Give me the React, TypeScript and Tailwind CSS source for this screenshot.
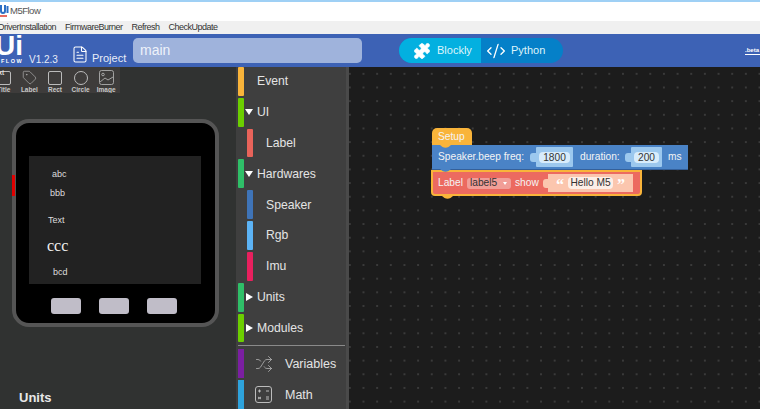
import { Puzzle, CodeXml, FileText, Tag, Shuffle } from 'lucide-react';

interface RowProps {
  label: string;
  color: string;
  indent?: boolean;
  arrow?: 'down' | 'right';
}

function ToolboxRow({ label, color, indent, arrow }: RowProps) {
  return (
    <div className="flex h-[29px] items-center text-[12.2px] text-[#e4e4e4]">
      <div className={`h-full w-[6px] rounded-[1px] ${color} ${indent ? 'ml-[9px]' : ''}`} />
      {arrow === 'down' && <span className="ml-[1px] h-0 w-0 border-x-[4px] border-t-[6px] border-x-transparent border-t-white" />}
      {arrow === 'right' && <span className="ml-[2px] h-0 w-0 border-y-[4px] border-l-[7px] border-y-transparent border-l-white" />}
      <span className={arrow ? 'ml-[4px]' : 'ml-[13px]'}>{label}</span>
    </div>
  );
}

function PaletteItem({ label, children }: { label: string; children: React.ReactNode }) {
  return (
    <div className="flex w-[25.6px] flex-col items-center pt-[3px]">
      <div className="flex h-[15px] items-center justify-center">{children}</div>
      <span className="mt-[1px] text-[6.5px] leading-[8px] font-bold text-[#c8c8c8]">{label}</span>
    </div>
  );
}

function Notch({ color, className }: { color: string; className: string }) {
  return (
    <svg className={`absolute z-10 ${className}`} width="11" height="3" viewBox="0 0 11 3">
      <path d="M0 0H11L8.5 2Q5.5 3.4 2.5 2Z" fill={color} />
    </svg>
  );
}

function NumberField({ value, outer, tab }: { value: string; outer: string; tab: string }) {
  return (
    <div className="flex items-center">
      <div className={`h-[9px] w-[6px] rounded-l-[3px] ${tab}`} />
      <div className={`flex h-[20px] items-center justify-center rounded-[1px] ${outer}`}>
        <span className="rounded-[4px] bg-[#d8ecfb] px-[4px] text-[10.2px] leading-[11px] text-[#333]">{value}</span>
      </div>
    </div>
  );
}

export default function App() {
  return (
    <div className="flex h-[409px] w-[760px] flex-col overflow-hidden bg-white font-['Liberation_Sans',Arial,sans-serif]">
      {/* Title bar */}
      <div className="flex h-[21px] shrink-0 items-center border-t-2 border-[#9fd0f5] bg-white">
        <svg width="9" height="13" viewBox="0 0 9 13" fill="none">
          <path d="M1 0V6Q1 8 3 8T5 6V0" stroke="#2d6fc4" strokeWidth="2" />
          <path d="M7.5 1V8" stroke="#2d6fc4" strokeWidth="2" />
          <path d="M0 11H7" stroke="#e86a5f" strokeWidth="2" />
        </svg>
        <span className="ml-[1px] text-[9.5px] tracking-[-0.5px] text-[#555]">M5Flow</span>
      </div>

      {/* Menu */}
      <div className="flex h-[13px] shrink-0 items-center gap-[9px] overflow-hidden bg-[#f0f0f0] text-[9px] tracking-[-0.5px] whitespace-nowrap text-[#333]">
        <span className="ml-[-2px]">DriverInstallation</span>
        <span>FirmwareBurner</span>
        <span>Refresh</span>
        <span>CheckUpdate</span>
      </div>

      {/* Header */}
      <div className="flex h-[33px] shrink-0 items-center bg-[#3d62b5] text-white">
        <div className="flex h-full w-[24px] shrink-0 flex-col overflow-hidden">
          <span className="mt-[-1px] ml-[-5px] text-[28px] leading-[25px] font-bold">Ui</span>
          <span className="ml-[1px] text-[5.5px] leading-[6px] font-bold tracking-[1.5px]">FLOW</span>
        </div>
        <span className="mt-[17px] ml-[5px] w-[42px] shrink-0 text-[10px] text-[#e8edf8]">V1.2.3</span>
        <FileText className="mt-[7px] h-[21px] w-[18px] shrink-0" strokeWidth={1.4} />
        <span className="mt-[15px] ml-[3px] w-[41px] shrink-0 text-[11px] text-[#e8edf8]">Project</span>
        <div className="flex h-[25px] w-[229px] shrink-0 items-center rounded-[5px] bg-[#9fb3dc] pl-[7px] text-[14px] text-[#eef2fa]">main</div>
        <div className="ml-[37px] flex h-[25px] w-[164px] shrink-0 overflow-hidden rounded-full bg-[#0580c8] text-[11px]">
          <div className="flex w-[82px] items-center bg-[#03b0e0] pl-[14px]">
            <Puzzle className="h-[18px] w-[18px] fill-white" strokeWidth={1} />
            <span className="ml-[6px] text-[#dff4fb]">Blockly</span>
          </div>
          <div className="flex items-center pl-[4px]">
            <CodeXml className="h-[20px] w-[22px]" strokeWidth={1.6} />
            <span className="ml-[4px] text-[#dff4fb]">Python</span>
          </div>
        </div>
        <span className="mt-[1px] ml-auto w-[15px] shrink-0 overflow-hidden border-b border-white text-[6px] leading-[7px] font-bold">.beta</span>
      </div>

      <div className="flex min-h-0 flex-1">
        {/* Left panel with device */}
        <div className="relative w-[236px] shrink-0 bg-[#303231]">
          <div className="h-[26px] w-[120px] overflow-hidden bg-[#3e3c3b]">
            <div className="ml-[-9px] flex">
              <PaletteItem label="Title">
                <span className="relative h-[14px] w-[14px] rounded-[2px] border border-[#bbb]">
                  <span className="absolute top-[-3px] left-[-3px] text-[6.5px] leading-[7px] font-bold text-[#ddd]">ext</span>
                </span>
              </PaletteItem>
              <PaletteItem label="Label">
                <Tag className="h-[15px] w-[15px] text-[#bbb]" strokeWidth={1} />
              </PaletteItem>
              <PaletteItem label="Rect">
                <span className="h-[14px] w-[14px] rounded-[2px] border border-[#bbb]" />
              </PaletteItem>
              <PaletteItem label="Circle">
                <span className="h-[14px] w-[14px] rounded-full border border-[#bbb]" />
              </PaletteItem>
              <PaletteItem label="Image">
                <svg width="15" height="15" viewBox="0 0 15 15" fill="none" stroke="#bbb" strokeWidth="0.8">
                  <rect x="0.5" y="0.5" width="14" height="14" rx="2" />
                  <circle cx="4" cy="4.5" r="1.3" />
                  <path d="M1 12 L6 8 L9 10 L14 7" />
                </svg>
              </PaletteItem>
            </div>
          </div>

          {/* Device */}
          <div className="absolute top-[52px] left-[12px] h-[208px] w-[207px] rounded-[17px] border-[4px] border-[#555] bg-black">
            <div className="absolute top-[33px] left-[13px] h-[128px] w-[172px] bg-[#222]" />
            <span className="absolute top-[45px] left-[36px] text-[9px] text-[#ddd]">abc</span>
            <span className="absolute top-[64px] left-[34px] text-[9px] text-[#ddd]">bbb</span>
            <span className="absolute top-[91px] left-[32px] text-[9px] text-[#ddd]">Text</span>
            <span className="absolute top-[114px] left-[31px] font-['Liberation_Serif',serif] text-[16px] leading-[18px] text-[#eee]">ccc</span>
            <span className="absolute top-[143px] left-[37px] text-[9px] text-[#ddd]">bcd</span>
            <div className="absolute top-[175px] left-[35px] h-[16px] w-[30px] rounded-[3px] bg-[#c0bdc8]" />
            <div className="absolute top-[175px] left-[83px] h-[16px] w-[30px] rounded-[3px] bg-[#c0bdc8]" />
            <div className="absolute top-[175px] left-[131px] h-[16px] w-[30px] rounded-[3px] bg-[#c0bdc8]" />
          </div>
          <div className="absolute top-[108px] left-[12px] h-[21px] w-[3px] bg-[#e00000]" />
          <span className="absolute top-[321px] left-[19px] text-[13px] font-bold text-[#e8e8e8]">Units</span>
        </div>

        {/* Toolbox */}
        <div className="flex w-[113px] shrink-0 flex-col gap-[2px] border-r-[3px] border-[#4a4a4a] bg-[#3f3f3f] pl-[2px]">
          <ToolboxRow label="Event" color="bg-[#f9b43a]" />
          <ToolboxRow label="UI" color="bg-[#6cce00]" arrow="down" />
          <ToolboxRow label="Label" color="bg-[#e8635a]" indent />
          <ToolboxRow label="Hardwares" color="bg-[#2fbf68]" arrow="down" />
          <ToolboxRow label="Speaker" color="bg-[#3f74b8]" indent />
          <ToolboxRow label="Rgb" color="bg-[#5cb3f5]" indent />
          <ToolboxRow label="Imu" color="bg-[#e8205e]" indent />
          <ToolboxRow label="Units" color="bg-[#2fbf68]" arrow="right" />
          <ToolboxRow label="Modules" color="bg-[#6cce00]" arrow="right" />
          <div className="mt-[1px] mr-[1px] mb-[1px] h-px bg-[#8a8a8a]" />
          <div className="flex h-[29px] items-center text-[12.5px] text-[#e4e4e4]">
            <div className="h-full w-[6px] bg-[#7b1fa2]" />
            <Shuffle className="ml-[10px] h-[18px] w-[20px] text-[#bbb]" strokeWidth={1} />
            <span className="mt-[1px] ml-[11px]">Variables</span>
          </div>
          <div className="flex h-[29px] items-center text-[12.5px] text-[#e4e4e4]">
            <div className="h-full w-[6px] bg-[#2ea3dc]" />
            <svg className="ml-[11px]" width="17" height="17" viewBox="0 0 17 17" fill="none" stroke="#bbb" strokeWidth="1">
              <rect x="0.5" y="0.5" width="16" height="16" rx="2.5" />
              <path d="M3 5h3M4.5 3.5v3M11 5h3M3 11l3 2M6 11l-3 2M11 11h3M11 13h3" />
            </svg>
            <span className="mt-[1px] ml-[13px]">Math</span>
          </div>
        </div>

        {/* Workspace */}
        <div className="relative flex-1 bg-[#1c1c1c] bg-[radial-gradient(circle,#3a3a3a_0.8px,transparent_0.9px)] bg-size-[13.67px_13.67px] bg-position-[-6px_0px]">
          <div className="absolute top-[61px] left-[83px] flex flex-col items-start text-[10.2px] whitespace-nowrap text-[#f4f4f4]">
            <div className="relative flex h-[17px] w-[40px] items-center rounded-t-[5px] bg-[#f9b43a] pl-[6px]">
              Setup
              <Notch color="#f9b43a" className="top-[17px] left-[8px]" />
            </div>
            <div className="relative flex h-[25px] w-[256px] items-center border-b border-[#34609a] bg-[#4a83c6] pl-[6px]">
              <span className="w-[86px] shrink-0">Speaker.beep freq:</span>
              <div className="ml-[6px]">
                <NumberField value="1800" outer="w-[37px] bg-[#9cc8ee]" tab="bg-[#9cc8ee]" />
              </div>
              <span className="ml-[7px] w-[38px] shrink-0">duration:</span>
              <div className="ml-[7px]">
                <NumberField value="200" outer="w-[31px] bg-[#9cc8ee]" tab="bg-[#9cc8ee]" />
              </div>
              <span className="ml-[6px]">ms</span>
              <Notch color="#4a83c6" className="top-[24px] left-[8px]" />
            </div>
            <div className="relative ml-[-1px] flex h-[26px] w-[211px] items-center rounded-b-[4px] border-2 border-[#f9b43a] bg-[#ec6a60] pl-[5px]">
              <span className="w-[25px] shrink-0">Label</span>
              <span className="ml-[4px] flex h-[11px] w-[44px] shrink-0 items-center rounded-[3px] bg-[#f19e97] pl-[3px] text-[#333]">
                label5
                <span className="ml-[6px] h-0 w-0 border-x-[2px] border-t-[3px] border-x-transparent border-t-white" />
              </span>
              <span className="ml-[4px] w-[23px] shrink-0">show</span>
              <div className="ml-[5px] h-[9px] w-[5px] shrink-0 rounded-l-[3px] bg-[#fbc6ae]" />
              <div className="flex h-[18px] w-[85px] shrink-0 items-center bg-[#fbc6ae] pl-[8px]">
                <span className="mt-[3px] w-[9px] font-['Liberation_Serif',serif] text-[16px] leading-[10px] font-bold text-white">“</span>
                <span className="ml-[3px] w-[45px] rounded-[4px] bg-[#fdeee7] text-center leading-[12px] text-[#333]">Hello M5</span>
                <span className="mt-[3px] ml-[4px] w-[9px] font-['Liberation_Serif',serif] text-[16px] leading-[10px] font-bold text-white">”</span>
              </div>
              <Notch color="#f9b43a" className="top-[24px] left-[9px]" />
            </div>
          </div>
        </div>
      </div>
    </div>
  );
}
